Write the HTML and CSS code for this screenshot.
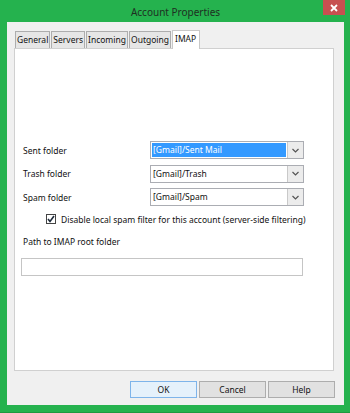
FILE: index.html
```html
<!DOCTYPE html>
<html lang="en">

<head>
    <meta charset="UTF-8">
    <title>Account Properties</title>
    <link rel="stylesheet" href="styles.css">
</head>

<body>
    <div class="window">
        <div class="title-bar">
            <span class="title">Account Properties</span>
            <div class="close-btn">
                <svg width="8" height="8" viewBox="0 0 8 8">
                    <path d="M1 1 L7 7 M7 1 L1 7" stroke="#fff" stroke-width="1.8" />
                </svg>
            </div>
        </div>
        <div class="client">
            <ul class="tabs">
                <li>General</li>
                <li>Servers</li>
                <li>Incoming</li>
                <li>Outgoing</li>
                <li class="active">IMAP</li>
            </ul>
            <div class="panel">
                <div class="row">
                    <span class="label">Sent folder</span>
                    <div class="select">
                        <span class="value selected">[Gmail]/Sent Mail</span>
                        <span class="arrow"><svg width="7" height="5" viewBox="0 0 7 5"><path d="M0.5 1 L3.5 4 L6.5 1" fill="none" stroke="#555" stroke-width="1.2" /></svg></span>
                    </div>
                </div>
                <div class="row">
                    <span class="label">Trash folder</span>
                    <div class="select">
                        <span class="value">[Gmail]/Trash</span>
                        <span class="arrow"><svg width="7" height="5" viewBox="0 0 7 5"><path d="M0.5 1 L3.5 4 L6.5 1" fill="none" stroke="#555" stroke-width="1.2" /></svg></span>
                    </div>
                </div>
                <div class="row">
                    <span class="label">Spam folder</span>
                    <div class="select">
                        <span class="value">[Gmail]/Spam</span>
                        <span class="arrow"><svg width="7" height="5" viewBox="0 0 7 5"><path d="M0.5 1 L3.5 4 L6.5 1" fill="none" stroke="#555" stroke-width="1.2" /></svg></span>
                    </div>
                </div>
                <div class="check-row">
                    <span class="checkbox">
                        <svg width="8" height="8" viewBox="0 0 8 8"><path d="M1 4 L3 6.5 L7 1" fill="none" stroke="#1e2a3a" stroke-width="1.6" /></svg>
                    </span>
                    <span>Disable local spam filter for this account (server-side filtering)</span>
                </div>
                <div class="path-label">Path to IMAP root folder</div>
                <div class="text-input"></div>
            </div>
            <div class="buttons">
                <div class="btn default">OK</div>
                <div class="btn">Cancel</div>
                <div class="btn">Help</div>
            </div>
        </div>
    </div>
</body>

</html>
```

FILE: styles.css
```css
* {
    padding: 0;
    margin: 0;
    box-sizing: border-box;
}

body {
    width: 350px;
    height: 413px;
    background: #25b24e;
    font-family: "Noto Sans", "Liberation Sans", sans-serif;
    font-size: 8.5px;
    color: #111;
    overflow: hidden;
}

.window {
    display: flex;
    flex-direction: column;
    height: 413px;
    padding: 0 6px 7px 7px;
    border-bottom: 1px solid #1d9a41;
}

.title-bar {
    position: relative;
    height: 22px;
    display: flex;
    align-items: center;
    justify-content: center;
}

.title-bar .title {
    font-size: 10px;
    color: #1f2f22;
    margin-top: 1px;
}

.close-btn {
    position: absolute;
    top: 0;
    right: -1px;
    width: 22px;
    height: 15px;
    background: #c75050;
    display: flex;
    align-items: center;
    justify-content: center;
}

.client {
    flex: 1;
    background: #f0f0f0;
    padding: 8px 9px 0 7px;
    display: flex;
    flex-direction: column;
}

.tabs {
    display: flex;
    list-style: none;
    padding-left: 1px;
    height: 18px;
    align-items: flex-end;
}

.tabs li {
    height: 17px;
    line-height: 16px;
    padding: 0 1px;
    margin-right: 1px;
    background: #e6e6e6;
    border: 1px solid #adadad;
    border-bottom: none;
}

.tabs li.active {
    height: 19px;
    margin-bottom: -1px;
    background: #fff;
    border-color: #c8c8c8;
    padding: 0 3px 0 2px;
    position: relative;
}

.panel {
    width: 320px;
    height: 323px;
    background: #fff;
    border: 1px solid #d0d0d0;
    padding: 92px 0 0 6px;
}

.row {
    display: flex;
    align-items: center;
    height: 18px;
    margin-bottom: 5.5px;
}

.row .label {
    width: 129px;
    padding-left: 2px;
}

.select {
    display: flex;
    width: 154px;
    height: 18px;
    border: 1px solid #abadb3;
    background: #fff;
}

.select .value {
    flex: 1;
    line-height: 14px;
    margin: 1px;
    padding-left: 1px;
}

.select .value.selected {
    background: #3399ff;
    color: #fff;
}

.select .arrow {
    width: 16px;
    border-left: 1px solid #c9c9c9;
    background: #ececec;
    display: flex;
    align-items: center;
    justify-content: center;
}

.check-row {
    display: flex;
    align-items: center;
    padding-left: 25px;
    height: 15px;
    margin-top: 4px;
}

.checkbox {
    width: 10px;
    height: 10px;
    border: 1px solid #444;
    background: #fff;
    display: flex;
    align-items: center;
    justify-content: center;
    margin-right: 5px;
}

.path-label {
    padding-left: 2px;
    margin-top: 9px;
    height: 14px;
}

.text-input {
    margin-top: 8px;
    width: 282px;
    height: 18px;
    border: 1px solid #c5c5c5;
    background: #fff;
}

.buttons {
    display: flex;
    justify-content: flex-end;
    gap: 2px;
    margin-top: 10px;
}

.btn {
    width: 67px;
    height: 17px;
    line-height: 15px;
    text-align: center;
    background: #e1e1e1;
    border: 1px solid #adadad;
}

.btn.default {
    border-color: #7eb4ea;
    background: #e5f1fb;
}
```
